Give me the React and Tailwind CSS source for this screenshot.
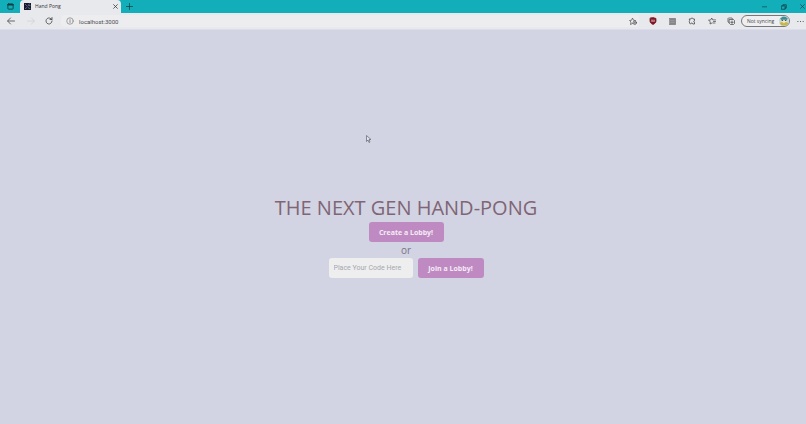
import React from 'react';

function Icon({ children, className = 'size-2', viewBox = '0 0 16 16' }) {
  return (
    <svg
      aria-hidden="true"
      viewBox={viewBox}
      className={`shrink-0 ${className}`}
      fill="none"
      stroke="currentColor"
      strokeWidth="1.6"
      strokeLinecap="round"
      strokeLinejoin="round"
    >
      {children}
    </svg>
  );
}

function IconButton({ label, className = 'w-5', children }) {
  return (
    <button type="button" aria-label={label} className={`flex h-3 shrink-0 items-center justify-center ${className}`}>
      {children}
    </button>
  );
}

function TabBar() {
  return (
    <header className="flex h-[13px] items-center bg-[#12aeb9] text-[#123b40]">
      <IconButton label="Tab actions">
        <Icon className="size-[7px]">
          <rect x="2" y="2" width="12" height="12" rx="1.5" strokeWidth="2" />
          <path d="M2 4h12" strokeWidth="3" />
        </Icon>
      </IconButton>
      <div className="flex h-full w-[101px] items-center gap-1 rounded-t-sm bg-[#e8e9ed] pl-1 text-[#333]">
        <Icon className="size-[7px]">
          <rect width="16" height="16" fill="#17182b" stroke="none" />
          <path d="M3 3l3 3M12 2l-3 5M3 13l4-3" stroke="#8a78b8" />
          <path d="M10 11l4 2M12 6h2" stroke="#77a5ad" />
        </Icon>
        <span className="flex-1 text-[5px] leading-none">Hand Pong</span>
        <IconButton label="Close tab" className="w-3">
          <Icon className="size-[5px]">
            <path d="M2 2l12 12M14 2L2 14" strokeWidth="2.4" />
          </Icon>
        </IconButton>
      </div>
      <IconButton label="New tab" className="w-4">
        <Icon className="size-[7px]">
          <path d="M8 1v14M1 8h14" />
        </Icon>
      </IconButton>
      <div className="ml-auto flex items-center">
        <IconButton label="Minimize">
          <Icon className="size-[5px]">
            <path d="M1 9h14" strokeWidth="2" />
          </Icon>
        </IconButton>
        <IconButton label="Restore">
          <Icon className="size-[6px]">
            <path d="M2 5h9v9H2zM5 5V2h9v9h-3" strokeWidth="2" />
          </Icon>
        </IconButton>
        <IconButton label="Close window" className="w-3 pl-1">
          <Icon className="size-[5px]">
            <path d="M2 2l12 12M14 2L2 14" strokeWidth="2" />
          </Icon>
        </IconButton>
      </div>
    </header>
  );
}

function Toolbar() {
  return (
    <nav className="flex h-4 items-center bg-[#e8e9ed] pl-px text-[#444]">
      <IconButton label="Back">
        <Icon>
          <path d="M15 8H2M7 2L1 8l6 6" />
        </Icon>
      </IconButton>
      <IconButton label="Forward" className="w-5 text-[#cfd0d4]">
        <Icon>
          <path d="M1 8h13M9 2l6 6-6 6" />
        </Icon>
      </IconButton>
      <IconButton label="Refresh" className="w-4">
        <Icon>
          <path d="M14 8a6 6 0 1 1-2-4.5L14 5M14 1v4h-4" />
        </Icon>
      </IconButton>
      <div className="ml-1 flex h-3 min-w-0 flex-1 items-center gap-[5px] rounded-sm bg-[#ededf0] pl-[5px]">
        <Icon className="size-2 text-[#777]">
          <circle cx="8" cy="8" r="6.5" strokeWidth="1.3" />
          <path d="M8 7v4M8 4.5v.2" />
        </Icon>
        <input
          aria-label="Address"
          defaultValue="localhost:3000"
          className="min-w-0 flex-1 bg-transparent font-[Roboto,sans-serif] text-[6px] leading-none text-[#4c4c50] outline-none"
        />
        <IconButton label="Add to favorites" className="w-3">
          <Icon>
            <path d="M7 13l-4 2 1-5-3-3 4-.5L7 2l2 4.500 4 .5" strokeWidth="1.3" />
            <circle cx="11.500" cy="11.500" r="3.500" strokeWidth="1.3" />
            <path d="M11.500 10v3M10 11.500h3" strokeWidth="1" />
          </Icon>
        </IconButton>
      </div>
      <div className="ml-[5px] flex items-center">
        <IconButton label="Content blocker" className="w-[18px]">
          <Icon>
            <path d="M8 1l6 2v5c0 3-2 5-6 7-4-2-6-4-6-7V3z" fill="#7e1723" stroke="#7e1723" />
            <path d="M5 6v3h2V6M9 6h2v3H9z" stroke="#e6c8cc" strokeWidth="1" />
          </Icon>
        </IconButton>
        <IconButton label="Reader extension">
          <Icon className="size-[7px]">
            <rect x="1" y="1" width="14" height="14" fill="#858589" stroke="#77777b" />
            <path d="M4 6h8M4 10h8" stroke="#b4b4b8" strokeWidth="1" />
          </Icon>
        </IconButton>
        <IconButton label="Extensions">
          <Icon>
            <path d="M3 4h3a2 2 0 0 1 4 0h3v3.500a1.500 1.500 0 0 0 0 3V14H9.500a2 2 0 0 0-4 0L3 12.500V10a2 2 0 0 1 0-3z" strokeWidth="1.5" />
          </Icon>
        </IconButton>
        <IconButton label="Favorites">
          <Icon>
            <path d="M8 12l-4 2 .7-4.500L1 6.500l4.500-.7L7.500 2l2 3.800H15M11 9h4M10 12h4" strokeWidth="1.4" />
          </Icon>
        </IconButton>
        <IconButton label="Collections" className="w-[18px]">
          <Icon>
            <path d="M4 11L2 10V3l1-1h7l1 2M5 5h8l2 2v6l-2 2H7l-2-2zM10 8v5M7.500 10.500h5" strokeWidth="1.4" />
          </Icon>
        </IconButton>
      </div>
      <button
        type="button"
        className="ml-px flex h-3 w-[49px] shrink-0 items-center justify-between rounded-full border border-[#77777b] bg-[#efeff1] pl-[5px] text-[5px] leading-none whitespace-nowrap"
      >
        Not syncing
        <Icon className="size-[10px]">
          <circle cx="8" cy="8" r="8" fill="#c5d9d5" stroke="none" />
          <path d="M2 4l4-3h4l4 3-2 3H4z" fill="#388e96" stroke="none" />
          <path d="M4 6h8v5H4z" fill="#f0e7cb" stroke="none" />
          <path d="M1 12q3-3 5-2l2 2 2-2q2-1 5 2l-3 3H4z" fill="#c8b64b" stroke="none" />
          <path d="M5 7h1M10 7h1" stroke="#27474b" />
        </Icon>
      </button>
      <IconButton label="Settings and more" className="w-4 pl-1">
        <Icon className="size-[7px]">
          <path d="M2 8h.1M8 8h.1M14 8h.1" strokeWidth="2.500" />
        </Icon>
      </IconButton>
    </nav>
  );
}

export default function App() {
  return (
    <div className="flex min-h-screen flex-col bg-[#d2d4e3] font-['Open_Sans','Noto_Sans',sans-serif]">
      <TabBar />
      <Toolbar />
      <main className="relative flex flex-1 flex-col items-center justify-center border-t border-[#dcddea] pt-[18px] pl-1.5">
        <h1 className="text-[20px] leading-7 font-normal text-[#806575]">THE NEXT GEN HAND-PONG</h1>
        <button type="button" className="h-5 w-[75px] rounded-[3px] bg-[#bf8ac2] text-[7px] leading-none font-bold text-[#f4eaf5]">
          Create a Lobby!
        </button>
        <p className="text-[10px] leading-4 text-[#777386]">or</p>
        <form className="flex gap-[5px]" onSubmit={(event) => event.preventDefault()}>
          <input
            aria-label="Lobby code"
            placeholder="Place Your Code Here"
            className="h-5 w-[84px] rounded-[3px] bg-[#eeeeef] px-[5px] font-[Roboto,sans-serif] text-[7px] text-[#555] outline-none placeholder:text-[#a5a7ae]"
          />
          <button type="submit" className="h-5 w-[66px] rounded-[3px] bg-[#bf8ac2] text-[7px] leading-none font-bold text-[#f4eaf5]">
            Join a Lobby!
          </button>
        </form>
        <svg aria-hidden="true" viewBox="0 0 10 16" className="absolute top-[105px] left-[366px] h-2 w-[5px]">
          <path d="M1 1v12l3-3 2 5 2-1-2-5h4z" fill="#e3e4eb" stroke="#686a77" strokeWidth="1.5" />
        </svg>
      </main>
    </div>
  );
}
